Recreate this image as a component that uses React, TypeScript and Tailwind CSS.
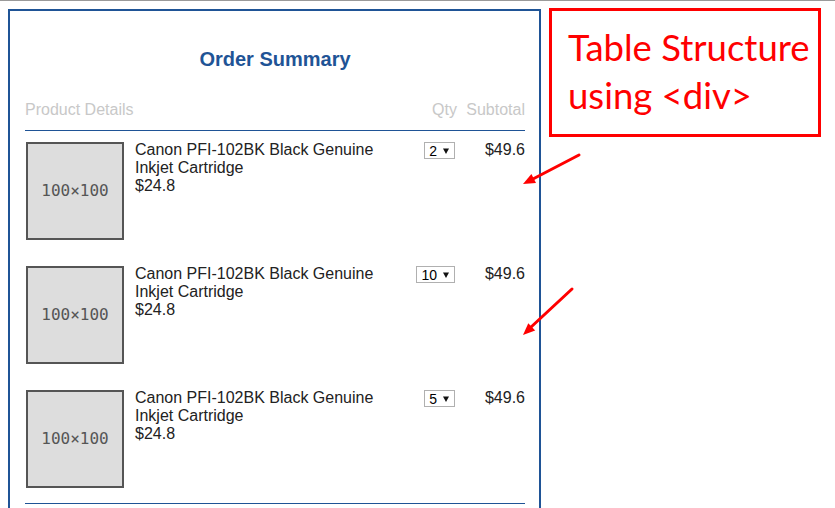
import React from 'react';

type Item = { id: number; name: string; price: string; qty: string; subtotal: string };

const items: Item[] = [
    { id: 1, name: 'Canon PFI-102BK Black Genuine Inkjet Cartridge', price: '$24.8', qty: '2', subtotal: '$49.6' },
    { id: 2, name: 'Canon PFI-102BK Black Genuine Inkjet Cartridge', price: '$24.8', qty: '10', subtotal: '$49.6' },
    { id: 3, name: 'Canon PFI-102BK Black Genuine Inkjet Cartridge', price: '$24.8', qty: '5', subtotal: '$49.6' },
];

const QtySelect = ({ value }: { value: string }) => (
    <span className="inline-flex items-center h-[17px] border border-[#b0b0b0] pl-[4px] pr-[5px] text-[14px] leading-none text-black">
        <span>{value}</span>
        <svg className="ml-[6px]" width="6" height="6" viewBox="0 0 6 6">
            <polygon points="0,0.5 6,0.5 3,6" fill="#111" />
        </svg>
    </span>
);

const Row = ({ item }: { item: Item }) => (
    <div className="flex items-start pt-[10px] pb-[15px]">
        <div className="ml-px mt-px w-[98px] h-[98px] shrink-0 border-2 border-[#555] bg-[#ddd] flex items-center justify-center font-['DejaVu_Sans_Mono',monospace] text-[16px] text-[#555]">
            100×100
        </div>
        <div className="flex-1 ml-[11px] pr-[14px] text-[16px] leading-[18px] text-[#222]">
            <div>{item.name}</div>
            <div>{item.price}</div>
        </div>
        <div className="w-[40px] flex justify-end pr-[2px] mt-px">
            <QtySelect value={item.qty} />
        </div>
        <div className="ml-[9px] w-[59px] text-right text-[16px] leading-[18px] text-[#222]">{item.subtotal}</div>
    </div>
);

export default function App() {
    return (
        <div className="relative w-[835px] h-[508px] overflow-hidden bg-white font-['Liberation_Sans',Arial,sans-serif]">
            <div className="h-px bg-[#9a9a9a]"></div>
            <div className="ml-[8px] mt-[8px] w-[533px] h-[600px] border-2 border-[#1f5496] pl-[15px] pr-[14px]">
                <h2 className="pt-[36px] text-center text-[20px] leading-[24px] font-bold text-[#1f5496]">Order Summary</h2>
                <div className="mt-[30px] flex pb-[11px] border-b border-[#1f5496] text-[16px] leading-[18px] text-[#c8c8c8]">
                    <div className="flex-1">Product Details</div>
                    <div className="w-[42px] text-right">Qty</div>
                    <div className="ml-[9px] w-[59px] text-right">Subtotal</div>
                </div>
                {items.map((item) => (
                    <Row key={item.id} item={item} />
                ))}
                <div className="h-px bg-[#1f5496]"></div>
            </div>

            {/* annotation */}
            <div className="absolute left-[549px] top-[8px] w-[272px] h-[129px] border-[3px] border-[#ff0000] pl-[16px] pt-[12px] font-['Lato',sans-serif] text-[36.5px] leading-[48px] text-[#ff0000] whitespace-nowrap">
                <div>Table Structure</div>
                <div>using &lt;div&gt;</div>
            </div>
            <svg className="absolute left-0 top-0" width="835" height="508" viewBox="0 0 835 508">
                <line x1="579" y1="155" x2="531" y2="180" stroke="#ff0000" strokeWidth="3" strokeLinecap="round" />
                <polygon points="523,184 536,183 531.4,174.1" fill="#ff0000" />
                <line x1="572" y1="289" x2="530" y2="328" stroke="#ff0000" strokeWidth="3" strokeLinecap="round" />
                <polygon points="523,335 535.2,330.4 528.3,323.2" fill="#ff0000" />
            </svg>
        </div>
    );
}
